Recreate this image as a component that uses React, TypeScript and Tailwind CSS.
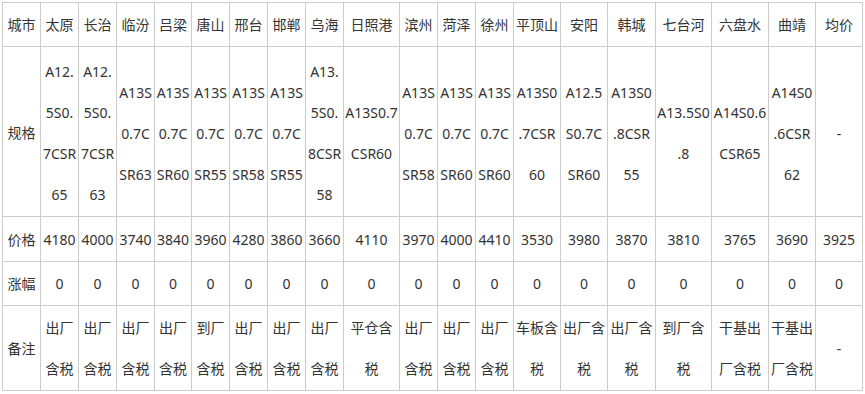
import React from "react";

type Col = {
  city: string;
  spec: string[];
  price: string;
  change: string;
  note: string[];
  w: string;
};

const cols: Col[] = [
  { city: "太原", spec: ["A12.", "5S0.", "7CSR", "65"], price: "4180", change: "0", note: ["出厂", "含税"], w: "38" },
  { city: "长治", spec: ["A12.", "5S0.", "7CSR", "63"], price: "4000", change: "0", note: ["出厂", "含税"], w: "38" },
  { city: "临汾", spec: ["A13S", "0.7C", "SR63"], price: "3740", change: "0", note: ["出厂", "含税"], w: "38" },
  { city: "吕梁", spec: ["A13S", "0.7C", "SR60"], price: "3840", change: "0", note: ["出厂", "含税"], w: "37" },
  { city: "唐山", spec: ["A13S", "0.7C", "SR55"], price: "3960", change: "0", note: ["到厂", "含税"], w: "38" },
  { city: "邢台", spec: ["A13S", "0.7C", "SR58"], price: "4280", change: "0", note: ["出厂", "含税"], w: "38" },
  { city: "邯郸", spec: ["A13S", "0.7C", "SR55"], price: "3860", change: "0", note: ["出厂", "含税"], w: "38" },
  { city: "乌海", spec: ["A13.", "5S0.", "8CSR", "58"], price: "3660", change: "0", note: ["出厂", "含税"], w: "38" },
  { city: "日照港", spec: ["A13S0.7", "CSR60"], price: "4110", change: "0", note: ["平仓含", "税"], w: "56" },
  { city: "滨州", spec: ["A13S", "0.7C", "SR58"], price: "3970", change: "0", note: ["出厂", "含税"], w: "38" },
  { city: "菏泽", spec: ["A13S", "0.7C", "SR60"], price: "4000", change: "0", note: ["出厂", "含税"], w: "38" },
  { city: "徐州", spec: ["A13S", "0.7C", "SR60"], price: "4410", change: "0", note: ["出厂", "含税"], w: "38" },
  { city: "平顶山", spec: ["A13S0", ".7CSR", "60"], price: "3530", change: "0", note: ["车板含", "税"], w: "47" },
  { city: "安阳", spec: ["A12.5", "S0.7C", "SR60"], price: "3980", change: "0", note: ["出厂含", "税"], w: "47" },
  { city: "韩城", spec: ["A13S0", ".8CSR", "55"], price: "3870", change: "0", note: ["出厂含", "税"], w: "48" },
  { city: "七台河", spec: ["A13.5S0", ".8"], price: "3810", change: "0", note: ["到厂含", "税"], w: "56" },
  { city: "六盘水", spec: ["A14S0.6", "CSR65"], price: "3765", change: "0", note: ["干基出", "厂含税"], w: "57" },
  { city: "曲靖", spec: ["A14S0", ".6CSR", "62"], price: "3690", change: "0", note: ["干基出", "厂含税"], w: "47" },
  { city: "均价", spec: ["-"], price: "3925", change: "0", note: ["-"], w: "47" },
];

function Lines({ lines }: { lines: string[] }) {
  return (
    <>
      {lines.map((l, i) => (
        <div key={i} className="whitespace-nowrap">
          {l}
        </div>
      ))}
    </>
  );
}

const cell =
  "border-r border-b border-[#cccccc] flex flex-col items-center justify-center text-center leading-[41px] overflow-hidden";

export default function App() {
  return (
    <div className="p-[2px] bg-white w-[865px] h-[394px]">
      <div
        className="grid border-l border-t border-[#cccccc] text-[14px] text-[#333333] w-[861px]"
        style={{
          fontFamily: '"Noto Sans", "Noto Sans CJK SC", sans-serif',
        }}
      >
        <div className="grid grid-cols-[38px_38px_38px_38px_37px_38px_38px_38px_38px_56px_38px_38px_38px_47px_47px_48px_56px_57px_47px_47px] grid-rows-[44px_170px_45px_44px_85px]">
          <div className={cell}>城市</div>
          {cols.map((c) => (
            <div key={"h" + c.city} className={cell}>
              {c.city}
            </div>
          ))}
          <div className={cell + " pt-[2px]"}>规格</div>
          {cols.map((c) => (
            <div key={"s" + c.city} className={cell + " pt-[3px]"}>
              <Lines lines={c.spec} />
            </div>
          ))}
          <div className={cell}>价格</div>
          {cols.map((c) => (
            <div key={"p" + c.city} className={cell}>
              {c.price}
            </div>
          ))}
          <div className={cell}>涨幅</div>
          {cols.map((c) => (
            <div key={"c" + c.city} className={cell}>
              {c.change}
            </div>
          ))}
          <div className={cell}>备注</div>
          {cols.map((c) => (
            <div key={"n" + c.city} className={cell}>
              <Lines lines={c.note} />
            </div>
          ))}
        </div>
      </div>
    </div>
  );
}
